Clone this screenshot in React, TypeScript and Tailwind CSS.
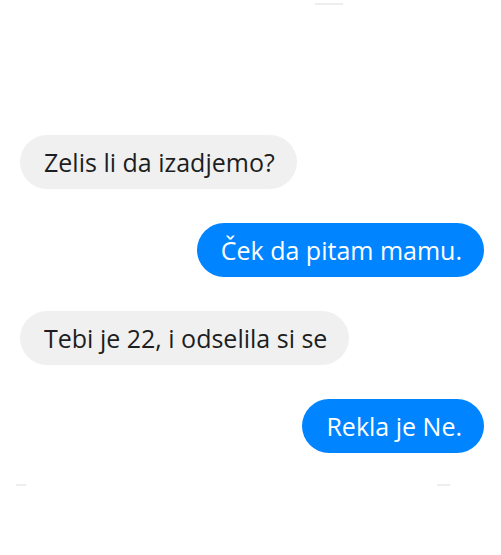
import React from "react";

function Bubble({ text, mine }: { text: string; mine?: boolean }) {
  return (
    <div className={mine ? "flex justify-end" : "flex justify-start"}>
      <div
        className={
          mine
            ? "h-[54px] flex items-center rounded-full bg-[#0084ff] text-white pl-[24px] pr-[22px] text-[25px] leading-none whitespace-nowrap"
            : "h-[54px] flex items-center rounded-full bg-[#f0f0f0] text-[#1c1e21] pl-[24px] pr-[22px] text-[25px] leading-none whitespace-nowrap"
        }
      >
        {text}
      </div>
    </div>
  );
}

export default function App() {
  return (
    <div
      className="relative w-[501px] h-[555px] bg-white overflow-hidden"
      style={{ fontFamily: '"Open Sans", "Noto Sans", sans-serif' }}
    >
      <div className="absolute left-[315px] top-[3px] w-[28px] h-[2px] bg-[#eeeeee]" />
      <div className="absolute left-[16px] top-[484px] w-[10px] h-[2px] bg-[#eeeeee]" />
      <div className="absolute left-[437px] top-[484px] w-[13px] h-[2px] bg-[#eeeeee]" />
      <div className="flex flex-col gap-[34px] pt-[135px] pl-[20px] pr-[17px]">
        <Bubble text="Zelis li da izadjemo?" />
        <Bubble text="Ček da pitam mamu." mine />
        <Bubble text="Tebi je 22, i odselila si se" />
        <Bubble text="Rekla je Ne." mine />
      </div>
    </div>
  );
}
